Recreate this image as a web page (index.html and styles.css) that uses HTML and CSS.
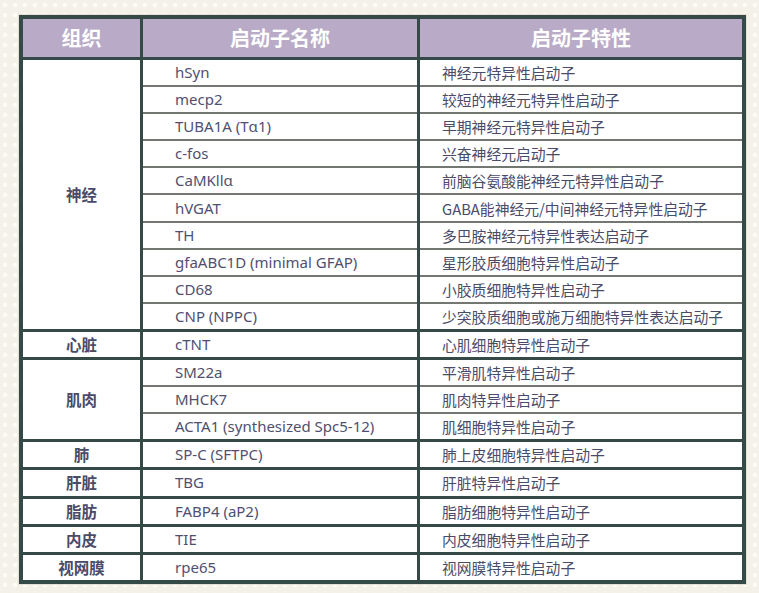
FILE: index.html
```html
<!DOCTYPE html>
<html lang="zh-CN">
<head>
<meta charset="utf-8">
<title>启动子</title>
<link rel="stylesheet" href="styles.css">
</head>
<body>
<div class="page">
<table class="promoters">
  <thead>
    <tr><th class="c1">组织</th><th class="c2">启动子名称</th><th class="c3">启动子特性</th></tr>
  </thead>
  <tbody>
    <tr class="gstart"><td class="tissue" rowspan="10">神经</td><td class="name">hSyn</td><td class="desc">神经元特异性启动子</td></tr>
    <tr><td class="name">mecp2</td><td class="desc">较短的神经元特异性启动子</td></tr>
    <tr><td class="name">TUBA1A (Tα1)</td><td class="desc">早期神经元特异性启动子</td></tr>
    <tr><td class="name">c-fos</td><td class="desc">兴奋神经元启动子</td></tr>
    <tr><td class="name">CaMKllα</td><td class="desc">前脑谷氨酸能神经元特异性启动子</td></tr>
    <tr><td class="name">hVGAT</td><td class="desc">GABA能神经元/中间神经元特异性启动子</td></tr>
    <tr><td class="name">TH</td><td class="desc">多巴胺神经元特异性表达启动子</td></tr>
    <tr><td class="name">gfaABC1D (minimal GFAP)</td><td class="desc">星形胶质细胞特异性启动子</td></tr>
    <tr><td class="name">CD68</td><td class="desc">小胶质细胞特异性启动子</td></tr>
    <tr><td class="name">CNP (NPPC)</td><td class="desc">少突胶质细胞或施万细胞特异性表达启动子</td></tr>
    <tr class="gstart"><td class="tissue">心脏</td><td class="name">cTNT</td><td class="desc">心肌细胞特异性启动子</td></tr>
    <tr class="gstart"><td class="tissue" rowspan="3">肌肉</td><td class="name">SM22a</td><td class="desc">平滑肌特异性启动子</td></tr>
    <tr><td class="name">MHCK7</td><td class="desc">肌肉特异性启动子</td></tr>
    <tr><td class="name">ACTA1 (synthesized Spc5-12)</td><td class="desc">肌细胞特异性启动子</td></tr>
    <tr class="gstart"><td class="tissue">肺</td><td class="name">SP-C (SFTPC)</td><td class="desc">肺上皮细胞特异性启动子</td></tr>
    <tr class="gstart"><td class="tissue">肝脏</td><td class="name">TBG</td><td class="desc">肝脏特异性启动子</td></tr>
    <tr class="gstart"><td class="tissue">脂肪</td><td class="name">FABP4 (aP2)</td><td class="desc">脂肪细胞特异性启动子</td></tr>
    <tr class="gstart"><td class="tissue">内皮</td><td class="name">TIE</td><td class="desc">内皮细胞特异性启动子</td></tr>
    <tr class="gstart"><td class="tissue">视网膜</td><td class="name">rpe65</td><td class="desc">视网膜特异性启动子</td></tr>
  </tbody>
</table>
</div>
</body>
</html>
```
FILE: styles.css
```css
html, body {
  margin: 0;
  padding: 0;
}
body {
  width: 759px;
  height: 593px;
  overflow: hidden;
  background-color: #f4f1e8;
  background-image: radial-gradient(circle, #fcfbf6 2px, transparent 2.6px);
  background-size: 10px 10px;
  font-family: "Noto Sans", "Noto Sans CJK SC", sans-serif;
  color: #4a4b69;
}
.page {
  padding: 15px 0 0 19px;
}
.promoters {
  width: 727px;
  border-collapse: collapse;
  border: 4px solid #354a47;
  background: #ffffff;
  box-shadow: 0 0 0 1px #e6e0d2;
  table-layout: fixed;
}
.promoters th {
  background: #b9abc8;
  color: #ffffff;
  font-family: "Noto Sans CJK SC", sans-serif;
  font-weight: 700;
  font-size: 20px;
  height: 38px;
  padding: 0;
  border-bottom: 3px solid #354a47;
  border-left: 3px solid #354a47;
  line-height: 38px;
}
.promoters th.c1 { width: 117px; border-left: none; }
.promoters th.c2 { width: 274px; }
.promoters td {
  height: 25.1px;
  padding: 0;
  font-size: 15px;
  line-height: 25px;
  border-top: 2px solid #737772;
  border-left: 3px solid #354a47;
  white-space: nowrap;
}
.promoters tr.gstart td {
  border-top: 3px solid #354a47;
}
.promoters td.tissue {
  text-align: center;
  font-family: "Noto Sans CJK SC", sans-serif;
  font-weight: 700;
  font-size: 15.5px;
  border-left: none;
  border-top: 3px solid #354a47;
}
.promoters td.name {
  padding-left: 32px;
  color: #4f5070;
}
.promoters td.desc {
  padding-left: 22px;
  font-family: "Noto Sans CJK SC", sans-serif;
  font-size: 14.8px;
}
```
